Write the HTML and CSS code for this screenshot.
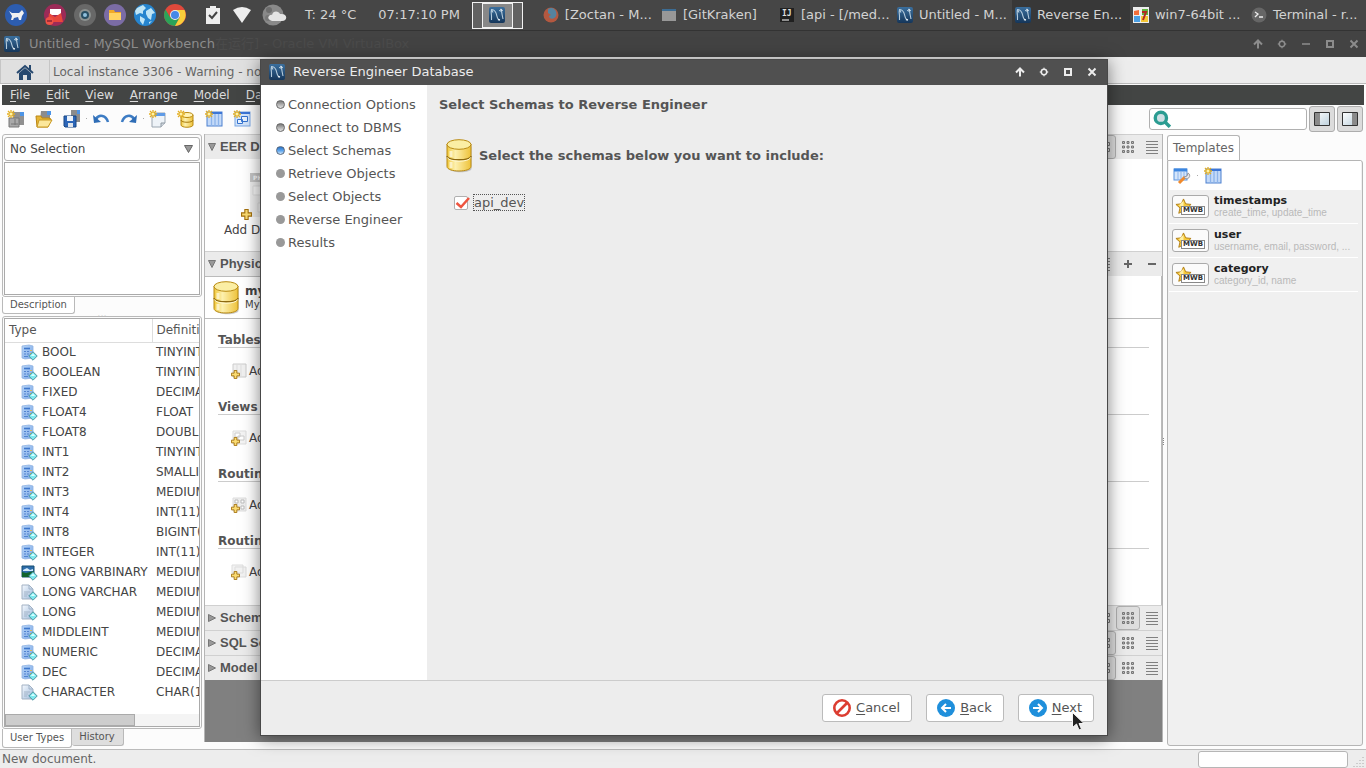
FILE: index.html
```html
<!DOCTYPE html>
<html lang="en">
<head>
<meta charset="utf-8">
<title>Untitled - MySQL Workbench</title>
<link rel="stylesheet" href="styles.css">
</head>
<body>
<svg class="sprite" aria-hidden="true">
  <defs>
    <linearGradient id="gold" x1="0" x2="1" y1="0" y2="0"><stop offset="0" stop-color="#f0c83c"/><stop offset=".35" stop-color="#fdf0ae"/><stop offset="1" stop-color="#eec23a"/></linearGradient>
    <linearGradient id="sea" x1="0" x2="0" y1="0" y2="1"><stop offset="0" stop-color="#3a6f9e"/><stop offset="1" stop-color="#15365a"/></linearGradient>
    <linearGradient id="sheet" x1="0" x2="1" y1="0" y2="1"><stop offset="0" stop-color="#f6faff"/><stop offset="1" stop-color="#9db9da"/></linearGradient>
    <linearGradient id="blue" x1="0" x2="1" y1="0" y2="1"><stop offset="0" stop-color="#b9d6f8"/><stop offset="1" stop-color="#7aa7e6"/></linearGradient>
    <linearGradient id="pane" x1="0" x2="1" y1="0" y2="1"><stop offset="0" stop-color="#fff"/><stop offset="1" stop-color="#bcd0dc"/></linearGradient>
  </defs>
  <symbol id="i-mysql" viewBox="0 0 16 16"><rect width="16" height="16" rx="2" fill="url(#sea)"/><path d="M2.500 13V9c-.5-3-.5-5 0-6.500 2 0 3.500 1.200 4.500 3.500s.8 5 2.500 6.500M2.500 2.500L4 5.500M10 3.500c2 0 3 1.500 3 3.500l1 5" fill="none" stroke="#b5cbdc" stroke-width="1.100"/><path d="M11.500 2l2 2M9 12.500l2 .5" stroke="#e7eef4" stroke-width="1.300"/></symbol>
  <symbol id="i-star" viewBox="0 0 8 8"><path d="M4 0v8M0 4h8M1 1l6 6M7 1L1 7" stroke="#e3ae23" stroke-width="1.300"/><circle cx="4" cy="4" r="1.500" fill="#fff3a8"/></symbol>
  <symbol id="i-db" viewBox="0 0 26 34"><path d="M2 6v22c0 5 22 5 22 0V6z" fill="#999" opacity=".5" transform="translate(1.500 1.500)"/><path d="M1 5v22.500c0 6 24 6 24 0V5z" fill="url(#gold)" stroke="#b98a12"/><path d="M1 17c0 5 24 5 24 0" fill="none" stroke="#8e6a10" stroke-width="1.300"/><path d="M1.500 18.500c1 5 22 5 23 0" fill="none" stroke="#fff7cf"/><ellipse cx="13" cy="5.500" rx="12" ry="4.800" fill="#fbeea4" stroke="#b98a12"/><path d="M5 12v6M5 23v6" stroke="#fffbe4" stroke-width="3" opacity=".7"/></symbol>
  <symbol id="i-newmodel" viewBox="0 0 18 18"><rect x="6" y="2" width="11" height="13" fill="#909090"/><rect x="13" y="2" width="4" height="4" fill="#4d94e6"/><path d="M2 8h10v9H2z" fill="#a9a9a9" stroke="#777"/><path d="M4 14h7M8 9v6" stroke="#777"/><use href="#i-star" width="8" height="8"/></symbol>
  <symbol id="i-open" viewBox="0 0 18 18"><path d="M6 1h9v10H5z" fill="#8c8c8c"/><rect x="12" y="1" width="4" height="4" fill="#4d94e6"/><path d="M1 6h5l1 2h7l2 1-3 8H2z" fill="#e6b535" stroke="#bb8714"/><path d="M4 10h13l-4 7H2z" fill="#fbe79b" stroke="#c99a23"/></symbol>
  <symbol id="i-save" viewBox="0 0 18 18"><path d="M8 0h9v12H8z" fill="#8c8c8c"/><rect x="14" y="0" width="3" height="4" fill="#4d94e6"/><path d="M1 6h12v11H2l-1-1z" fill="#2c66b8" stroke="#174785"/><path d="M4 6h6v5H4z" fill="#eaf2fb"/><path d="M5 13h5v4H5z" fill="#dfe5ec"/></symbol>
  <symbol id="i-undo" viewBox="0 0 18 18"><path d="M4 9c3-5 10-4 12 3" fill="none" stroke="#3d7cc4" stroke-width="2.500"/><path d="M1 5l1 8 7-1z" fill="#2f6db6"/></symbol>
  <symbol id="i-page" viewBox="0 0 18 18"><path d="M3 3h13v10l-4 4H3z" fill="#eef3f8" stroke="#9aa5b0"/><path d="M5 3h11v3H5z" fill="#5f9be6"/><path d="M12 17v-4h4" fill="#cfd6dd" stroke="#8f99a3"/><use href="#i-star" width="8" height="8"/></symbol>
  <symbol id="i-newdb" viewBox="0 0 18 18"><path d="M4 5v10c0 3 12 3 12 0V5z" fill="url(#gold)" stroke="#b98a12"/><ellipse cx="10" cy="5" rx="6" ry="2.500" fill="#fff3b4" stroke="#b98a12"/><path d="M4 10c0 3 12 3 12 0" fill="none" stroke="#a67a10"/><use href="#i-star" width="8" height="8"/></symbol>
  <symbol id="i-newtable" viewBox="0 0 18 18"><rect x="2" y="2" width="15" height="14" fill="#c4daf8" stroke="#4d80cf"/><path d="M2 3h15" stroke="#3c76d6" stroke-width="2"/><path d="M6.500 4v12M10 4v12M13.500 4v12" stroke="#8db4ea" stroke-width="1.300"/><use href="#i-star" width="8" height="8"/></symbol>
  <symbol id="i-newview" viewBox="0 0 18 18"><rect x="2" y="2" width="15" height="14" fill="#d3e5fb" stroke="#78a5e2"/><path d="M2 3h15" stroke="#3c76d6" stroke-width="2"/><path d="M8.500 6.500h6v5h-6zM4.500 9.500h5v4h-5z" fill="#eaf3fe" stroke="#3573cf"/><use href="#i-star" width="8" height="8"/></symbol>
  <symbol id="i-edittable" viewBox="0 0 18 18"><rect x="1" y="2" width="13" height="11" fill="#d5e6fb" stroke="#5a93dd"/><path d="M1 3h13" stroke="#3c86e0" stroke-width="3"/><path d="M5 4v9M8 4v9M11 4v9" stroke="#8db4ea"/><path d="M6 16l6-6" stroke="#f08a2c" stroke-width="3"/><path d="M11 10a3 3 0 1 0 4-4l-1 3z" fill="#e5e5ea" stroke="#98989e"/></symbol>
  <symbol id="i-num" viewBox="0 0 17 17"><path d="M1 2l7-1 4 1v12l-8 1-3-1z" fill="url(#blue)" stroke="#8fb2e2" stroke-width=".8"/><path d="M3 4.500h6" stroke="#3f78cc" stroke-width="1.600"/><path d="M3 7.500h2M6 7.500h2M3 10h2M6 10h2M3 12.500h4" stroke="#5283cf"/><path d="M10 6v1M10 9v1" stroke="#f6b526" stroke-width="1.500"/><use href="#i-gem" x="7" y="7" width="10" height="10"/></symbol>
  <symbol id="i-text" viewBox="0 0 17 17"><path d="M1 1h7l4 4v10H1z" fill="url(#sheet)" stroke="#a3b2c4"/><path d="M8 1v4h4M3 8h6M3 10h4M3 12h3" fill="none" stroke="#a3b4c8"/><use href="#i-gem" x="7" y="7" width="10" height="10"/></symbol>
  <symbol id="i-blob" viewBox="0 0 17 17"><path d="M1 2h12v11H1z" fill="#2e6dab" stroke="#164f73"/><path d="M2 6l4-2 3 2 3-1v2H2z" fill="#d6ebfb"/><path d="M1 8l4 1 8-2v6H1z" fill="#12642c"/><use href="#i-gem" x="7" y="7" width="10" height="10"/></symbol>
  <symbol id="i-gem" viewBox="0 0 9 9"><path d="M4.500.7l3.800 3.800-3.800 3.800L.7 4.500z" fill="#7ee9ee" stroke="#4a8794" stroke-width=".8"/><path d="M2.500 4.500l2-2.300 2 2.300z" fill="#d8ffff"/></symbol>
  <symbol id="i-plus" viewBox="0 0 10 10"><path d="M3.500.5h3v3h3v3h-3v3h-3v-3h-3v-3h3z" fill="#fbdc72" stroke="#a4700d"/></symbol>
  <symbol id="i-big" viewBox="0 0 14 14"><path d="M1.500 2.500h4v3h-4zM8.500 2.500h4v3h-4zM1.500 8.500h4v3h-4zM8.500 8.500h4v3h-4z" fill="none" stroke="#777"/></symbol>
  <symbol id="i-grid" viewBox="0 0 14 14"><path d="M1.500 1.500h2v2h-2zM6 1.500h2v2H6zM10.500 1.500h2v2h-2zM1.500 6h2v2h-2zM6 6h2v2H6zM10.500 6h2v2h-2zM1.500 10.500h2v2h-2zM6 10.500h2v2H6zM10.500 10.500h2v2h-2z" fill="#bbb" stroke="#777"/></symbol>
  <symbol id="i-list" viewBox="0 0 14 14"><path d="M1 1.500h12M1 4.500h12M1 7.500h12M1 10.500h12M1 13.500h12" stroke="#808080"/></symbol>
  <symbol id="i-up" viewBox="0 0 10 10"><path d="M5 9.500V2M1 5.500l4-4 4 4" fill="none" stroke="currentColor" stroke-width="2"/></symbol>
  <symbol id="i-gear" viewBox="0 0 10 10"><circle cx="5" cy="5" r="2.700" fill="none" stroke="currentColor" stroke-width="1.500"/><path d="M5 .800v1M5 8.200v1M.8 5h1M8.200 5h1" stroke="currentColor" stroke-width="1.500"/></symbol>
  <symbol id="i-min" viewBox="0 0 10 10"><path d="M1 5h8" stroke="currentColor" stroke-width="1.500"/></symbol>
  <symbol id="i-max" viewBox="0 0 10 10"><path d="M2 2h6v6H2z" fill="none" stroke="currentColor" stroke-width="2"/></symbol>
  <symbol id="i-close" viewBox="0 0 10 10"><path d="M1.500 1.500l7 7M8.500 1.500l-7 7" stroke="currentColor" stroke-width="2"/></symbol>
  <symbol id="i-template" viewBox="0 0 18 18"><path d="M9 1l2.300 5.200 5.700.6-4.300 3.800 1.300 5.600L9 13.300l-5 2.900 1.300-5.600L1 6.800l5.700-.6z" fill="#f7cb3c" stroke="#b07d14"/><path d="M9 3v6L4 8z" fill="#fff0a6"/></symbol>
</svg>

<header class="panel">
  <nav class="launchers" aria-label="Launchers">
    <button aria-label="Menu"><svg viewBox="0 0 22 22"><circle cx="11" cy="11" r="11" fill="#2d5db0"/><path d="M4 7l3 2h7l3-3 2 3-2 3-1 4h-2l-1-3-4 1-1 2H6l1-4z" fill="#f1f1f1"/></svg></button>
    <button aria-label="Mail"><svg viewBox="0 0 22 22"><circle cx="11" cy="11" r="11" fill="#9c2b58"/><path d="M6 5h11v6H6z" fill="#fff"/><path d="M5 9l6 4 6-4 2 9H4z" fill="#e8473c"/><circle cx="5.500" cy="17" r="4" fill="#ef5146"/><path d="M3 17h5" stroke="#8b2634" stroke-width="1.500"/></svg></button>
    <button aria-label="Settings"><svg viewBox="0 0 22 22"><circle cx="11" cy="11" r="11" fill="#686868"/><circle cx="11" cy="11" r="6" fill="#8d9291"/><circle cx="11" cy="11" r="4" fill="#284e63"/><circle cx="11" cy="11" r="2" fill="#8fc0dd"/></svg></button>
    <button aria-label="Files"><svg viewBox="0 0 22 22"><circle cx="11" cy="11" r="11" fill="#7b6ca5"/><path d="M5 6h5l1 2h6v8H5z" fill="#f0a827"/><path d="M5 9h12v7H5z" fill="#ffd261"/></svg></button>
    <button aria-label="Web"><svg viewBox="0 0 22 22"><circle cx="11" cy="11" r="11" fill="#2685cf"/><path d="M3 4l6-3 3 3-3 3v3l-3-1-4 2-1-4zM12 7l5-3 4 5-3 1-1 6-3-2-2-4zM6 12l5 3-2 6-3-4zM15 18l3-1-3 3z" fill="#bfe5f6"/></svg></button>
    <button aria-label="Chrome"><svg viewBox="0 0 22 22"><circle cx="11" cy="11" r="11" fill="#e0493b"/><path d="M1.500 5.500A11 11 0 0 0 11 22l5-9-5 3-5-3z" fill="#2ba359"/><path d="M20.500 6H11l5 7-5 9A11 11 0 0 0 20.500 6z" fill="#f8cf3b"/><circle cx="11" cy="11" r="5" fill="#eee"/><circle cx="11" cy="11" r="4" fill="#4688e8"/></svg></button>
  </nav>
  <div class="tray">
    <svg width="14" height="18" viewBox="0 0 14 18"><path d="M0 2h4V0h6v2h4v16H0z" fill="#eee"/><path d="M3 9l3 3 5-6" fill="none" stroke="#444" stroke-width="2"/></svg>
    <svg width="18" height="16" viewBox="0 0 18 16"><path d="M0 3q9-6 18 0L9 16z" fill="#eee"/></svg>
    <svg width="26" height="22" viewBox="0 0 26 22"><circle cx="11" cy="11" r="10.500" fill="#898989"/><circle cx="7" cy="6" r="3" fill="#6d6d6d"/><circle cx="6" cy="14" r="3" fill="#777"/><path d="M8 16c-4-2 0-6 2-5 1-5 7-4 8-1 8-1 8 7 2 7H10z" fill="#e4e4e4"/></svg>
    <span class="temp">T: 24 °C</span>
    <span>07:17:10 PM</span>
  </div>
  <button class="pager" aria-label="Workspace"><span><svg width="16" height="16"><use href="#i-mysql"/></svg></span></button>
  <nav class="tasks" aria-label="Windows">
    <button><svg class="dim" viewBox="0 0 16 16"><circle cx="8" cy="8" r="7.500" fill="#e2613e"/><path d="M5 2c5-3 10 2 8 7-2 4-7 3-7 0l2-1-3-2z" fill="#5a9ec5"/></svg>[Zoctan - M...</button>
    <button><svg class="dim" viewBox="0 0 16 16"><path d="M1 3h14v11H1z" fill="#bbb"/><path d="M1 2h14v2H1z" fill="#397db4"/></svg>[GitKraken]</button>
    <button><svg viewBox="0 0 16 16"><path d="M1 1h14v14H1z" fill="#202020"/><text class="ij" x="3" y="9">IJ</text><path d="M3 13h7" stroke="#fff"/></svg>[api - [/med...</button>
    <button><svg><use href="#i-mysql"/></svg>Untitled - M...</button>
    <button class="current"><svg><use href="#i-mysql"/></svg>Reverse En...</button>
    <button><svg viewBox="0 0 16 16"><path d="M0 0h16v16H0z" fill="#eee"/><path d="M1 4l5-1v5H1z" fill="#f26e3a"/><path d="M9 2h6v6H9z" fill="#5db541"/><path d="M1 9h6v6H1z" fill="#4b9fe3"/><path d="M8 9h7v6H8z" fill="#f5c736"/><path d="M9 5h4l-3 8" fill="none" stroke="#b22a20" stroke-width="2"/></svg>win7-64bit ...</button>
    <button><svg viewBox="0 0 16 16"><circle cx="8" cy="8" r="7.500" fill="#666"/><path d="M4 5l3 2-3 3M8 10h4" fill="none" stroke="#eee" stroke-width="1.300"/></svg>Terminal - r...</button>
  </nav>
</header>

<div class="titlebar">
  <svg width="16" height="16"><use href="#i-mysql"/></svg>
  <span>Untitled - MySQL Workbench</span>
  <span class="ghost">在运行] - Oracle VM VirtualBox</span>
  <div class="controls">
    <button aria-label="Shade"><svg><use href="#i-up"/></svg></button>
    <button aria-label="Options"><svg><use href="#i-gear"/></svg></button>
    <button aria-label="Minimize"><svg><use href="#i-min"/></svg></button>
    <button aria-label="Maximize"><svg><use href="#i-max"/></svg></button>
    <button aria-label="Close"><svg><use href="#i-close"/></svg></button>
  </div>
</div>

<div class="doctabs">
  <button class="home" aria-label="Home"><svg width="18" height="16" viewBox="0 0 18 16"><path d="M1 9l8-7 8 7" fill="none" stroke="#27496f" stroke-width="2"/><path d="M13 1h2v5h-2z" fill="#27496f"/><path d="M3 9l6-5 6 5v7h-4v-5H7v5H3z" fill="#27496f"/></svg></button>
  <button class="doc">Local instance 3306 - Warning - not supported</button>
</div>

<nav class="menubar" aria-label="Main menu">
  <button><u>F</u>ile</button><button><u>E</u>dit</button><button><u>V</u>iew</button><button><u>A</u>rrange</button><button><u>M</u>odel</button><button><u>D</u>atabase</button>
</nav>

<div class="toolbar">
  <button aria-label="New model"><svg><use href="#i-newmodel"/></svg></button>
  <button aria-label="Open"><svg><use href="#i-open"/></svg></button>
  <button aria-label="Save"><svg><use href="#i-save"/></svg></button>
  <i></i>
  <button aria-label="Undo"><svg><use href="#i-undo"/></svg></button>
  <button aria-label="Redo"><svg class="flip"><use href="#i-undo"/></svg></button>
  <i></i>
  <button aria-label="New diagram"><svg><use href="#i-page"/></svg></button>
  <button aria-label="New schema"><svg><use href="#i-newdb"/></svg></button>
  <button aria-label="New table"><svg><use href="#i-newtable"/></svg></button>
  <button aria-label="New view"><svg><use href="#i-newview"/></svg></button>
  <label class="search"><svg width="16" height="16" viewBox="0 0 16 16"><path d="M10 10l5 5" stroke="#2b9c92" stroke-width="3"/><circle cx="7" cy="7" r="5" fill="#cfdfe4" stroke="#2b9c92" stroke-width="3"/></svg><input type="text" aria-label="Search"></label>
  <button class="toggle" aria-label="Left panel"><svg viewBox="0 0 16 14"><path d="M.5.5h15v13H.5z" fill="url(#pane)" stroke="#333"/><path d="M1 1h5v12H1z" fill="#8a8a8a"/></svg></button>
  <button class="toggle" aria-label="Right panel"><svg viewBox="0 0 16 14"><path d="M.5.5h15v13H.5z" fill="url(#pane)" stroke="#333"/><path d="M10 1h5v12h-5z" fill="#8a8a8a"/></svg></button>
</div>

<main class="work">
  <aside class="left">
    <section class="frame">
      <div class="combo"><select aria-label="Selection"><option>No Selection</option></select><svg width="9" height="8" viewBox="0 0 9 8"><path d="M.5.5h8l-4 7z" fill="#999" stroke="#666"/></svg></div>
      <div class="blank"></div>
    </section>
    <div class="tabs"><button class="on">Description</button></div>
    <div class="grip">...</div>
    <section class="frame types">
      <div class="tablebox">
        <table>
          <thead><tr><th>Type</th><th>Definition</th></tr></thead>
          <tbody>
            <tr><td><svg><use href="#i-num"/></svg>BOOL</td><td>TINYINT(1)</td></tr>
            <tr><td><svg><use href="#i-num"/></svg>BOOLEAN</td><td>TINYINT(1)</td></tr>
            <tr><td><svg><use href="#i-num"/></svg>FIXED</td><td>DECIMAL(10,0)</td></tr>
            <tr><td><svg><use href="#i-num"/></svg>FLOAT4</td><td>FLOAT</td></tr>
            <tr><td><svg><use href="#i-num"/></svg>FLOAT8</td><td>DOUBLE</td></tr>
            <tr><td><svg><use href="#i-num"/></svg>INT1</td><td>TINYINT(4)</td></tr>
            <tr><td><svg><use href="#i-num"/></svg>INT2</td><td>SMALLINT(6)</td></tr>
            <tr><td><svg><use href="#i-num"/></svg>INT3</td><td>MEDIUMINT(9)</td></tr>
            <tr><td><svg><use href="#i-num"/></svg>INT4</td><td>INT(11)</td></tr>
            <tr><td><svg><use href="#i-num"/></svg>INT8</td><td>BIGINT(20)</td></tr>
            <tr><td><svg><use href="#i-num"/></svg>INTEGER</td><td>INT(11)</td></tr>
            <tr><td><svg><use href="#i-blob"/></svg>LONG VARBINARY</td><td>MEDIUMBLOB</td></tr>
            <tr><td><svg><use href="#i-text"/></svg>LONG VARCHAR</td><td>MEDIUMTEXT</td></tr>
            <tr><td><svg><use href="#i-text"/></svg>LONG</td><td>MEDIUMTEXT</td></tr>
            <tr><td><svg><use href="#i-num"/></svg>MIDDLEINT</td><td>MEDIUMINT(9)</td></tr>
            <tr><td><svg><use href="#i-num"/></svg>NUMERIC</td><td>DECIMAL(10,0)</td></tr>
            <tr><td><svg><use href="#i-num"/></svg>DEC</td><td>DECIMAL(10,0)</td></tr>
            <tr><td><svg><use href="#i-text"/></svg>CHARACTER</td><td>CHAR(1)</td></tr>
          </tbody>
        </table>
        <div class="hscroll"><span></span></div>
      </div>
    </section>
    <div class="tabs"><button class="on">User Types</button><button class="off">History</button></div>
  </aside>

  <section class="center">
    <h2 class="bar"><svg class="tri" viewBox="0 0 8 8"><path d="M.5.5h7l-3.500 7z"/></svg><span>EER Diagrams</span><svg class="v on"><use href="#i-big"/></svg><svg class="v"><use href="#i-grid"/></svg><svg class="v"><use href="#i-list"/></svg></h2>
    <div class="diagrams">
      <button><svg width="46" height="50" viewBox="0 0 46 50"><path d="M10 1h36v44H10z" fill="#eee"/><path d="M10 1h36v9H10z" fill="#c6c6c6"/><text class="phys" x="13" y="8">PHYSICAL</text><path d="M13 14h10v9H13zM28 14h12v10H28zM18 31h12v9H18z" fill="#f8f8f8" stroke="#ddd"/><use href="#i-plus" x="1" y="37" width="11" height="11"/></svg>Add Diagram</button>
    </div>
    <h2 class="bar"><svg class="tri" viewBox="0 0 8 8"><path d="M.5.5h7l-3.500 7z"/></svg><span>Physical Schemas</span><svg class="v"><use href="#i-list"/></svg><svg class="v" viewBox="0 0 14 14"><path d="M3 7h8M7 3v8" stroke="#666" stroke-width="2"/></svg><svg class="v" viewBox="0 0 14 14"><path d="M3 7h8" stroke="#666" stroke-width="2"/></svg></h2>
    <div class="schema">
      <div class="schematab"><svg width="26" height="34"><use href="#i-db"/></svg><p><b>mydb</b><span>MySQL Schema</span></p></div>
      <div class="objects">
        <h3>Tables</h3><button><svg viewBox="0 0 16 16"><path d="M2 1h13v13H2z" fill="#f0f0f0" stroke="#ccc"/><path d="M6 2v11M10 2v11" stroke="#ddd"/><use href="#i-plus" x="0" y="7" width="9" height="9"/></svg>Add Table</button>
        <h3>Views</h3><button><svg viewBox="0 0 16 16"><path d="M2 1h13v13H2z" fill="#f4f4f4" stroke="#ddd"/><path d="M4 3h5v4H4zM7 6h6v4H7z" fill="#fff" stroke="#ccc"/><use href="#i-plus" x="0" y="7" width="9" height="9"/></svg>Add View</button>
        <h3>Routines</h3><button><svg viewBox="0 0 16 16"><path d="M2 1h13v13H2z" fill="#eee" stroke="#ddd"/><path d="M4 3h3v3H4zM10 3h3v3h-3zM10 9h3v3h-3z" fill="#fff" stroke="#bbb"/><use href="#i-plus" x="0" y="7" width="9" height="9"/></svg>Add Routine</button>
        <h3>Routine Groups</h3><button><svg viewBox="0 0 16 16"><path d="M1 1h11v8H1zM4 3h11v10H4z" fill="#f2f2f2" stroke="#ddd"/><use href="#i-plus" x="0" y="7" width="9" height="9"/></svg>Add Group</button>
      </div>
    </div>
    <h2 class="bar"><svg class="tri" viewBox="0 0 8 8"><path d="M.5.5v7l7-3.500z"/></svg><span>Schema Privileges</span><svg class="v"><use href="#i-big"/></svg><svg class="v on"><use href="#i-grid"/></svg><svg class="v"><use href="#i-list"/></svg></h2>
    <h2 class="bar"><svg class="tri" viewBox="0 0 8 8"><path d="M.5.5v7l7-3.500z"/></svg><span>SQL Scripts</span><svg class="v on"><use href="#i-big"/></svg><svg class="v"><use href="#i-grid"/></svg><svg class="v"><use href="#i-list"/></svg></h2>
    <h2 class="bar"><svg class="tri" viewBox="0 0 8 8"><path d="M.5.5v7l7-3.500z"/></svg><span>Model Notes</span><svg class="v on"><use href="#i-big"/></svg><svg class="v"><use href="#i-grid"/></svg><svg class="v"><use href="#i-list"/></svg></h2>
  </section>

  <aside class="right">
    <div class="toptabs"><button>Templates</button></div>
    <div class="templates">
      <div class="tools"><button aria-label="Edit templates"><svg><use href="#i-edittable"/></svg></button><i></i><button aria-label="New table from template"><svg><use href="#i-newtable"/></svg></button></div>
      <ul>
        <li><span class="badge"><svg width="17" height="17"><use href="#i-template"/></svg><em>MWB</em></span><p><b>timestamps</b><span>create_time, update_time</span></p></li>
        <li><span class="badge"><svg width="17" height="17"><use href="#i-template"/></svg><em>MWB</em></span><p><b>user</b><span>username, email, password, ...</span></p></li>
        <li><span class="badge"><svg width="17" height="17"><use href="#i-template"/></svg><em>MWB</em></span><p><b>category</b><span>category_id, name</span></p></li>
      </ul>
    </div>
  </aside>
</main>

<footer class="status"><span>New document.</span><div class="progress"></div><svg class="resize" width="12" height="12" viewBox="0 0 12 12"><path d="M10 1v1M7 4v1M10 4v1M4 7v1M7 7v1M10 7v1M1 10v1M4 10v1M7 10v1M10 10v1" stroke="#aaa"/></svg></footer>

<div class="dialog" role="dialog" aria-label="Reverse Engineer Database">
  <div class="dialog-title">
    <svg width="16" height="16"><use href="#i-mysql"/></svg>
    <span>Reverse Engineer Database</span>
    <div class="controls">
      <button aria-label="Shade dialog"><svg><use href="#i-up"/></svg></button>
      <button aria-label="Dialog options"><svg><use href="#i-gear"/></svg></button>
      <button aria-label="Maximize dialog"><svg><use href="#i-max"/></svg></button>
      <button aria-label="Close dialog"><svg><use href="#i-close"/></svg></button>
    </div>
  </div>
  <div class="dialog-body">
    <ol class="steps">
      <li class="done">Connection Options</li>
      <li class="done">Connect to DBMS</li>
      <li class="now">Select Schemas</li>
      <li>Retrieve Objects</li>
      <li>Select Objects</li>
      <li>Reverse Engineer</li>
      <li>Results</li>
    </ol>
    <div class="page">
      <h1>Select Schemas to Reverse Engineer</h1>
      <div class="intro"><svg width="26" height="34"><use href="#i-db"/></svg><strong>Select the schemas below you want to include:</strong></div>
      <label class="check"><span class="box"><input type="checkbox" checked><svg width="17" height="15" viewBox="0 0 17 15"><path d="M2.500 7l4.500 4 8-9" fill="none" stroke="#ee5540" stroke-width="2.500"/></svg></span><span class="name">api_dev</span></label>
    </div>
  </div>
  <div class="actions">
    <button><svg viewBox="0 0 18 18"><circle cx="9" cy="9" r="7.700" fill="#fff" stroke="#dc3d31" stroke-width="2.600"/><path d="M4 14L14 4" stroke="#dc3d31" stroke-width="2.600"/></svg><span><u>C</u>ancel</span></button>
    <button><svg viewBox="0 0 18 18"><circle cx="9" cy="9" r="9" fill="#1f8fdb"/><path d="M14 9H5M9 5L5 9l4 4" fill="none" stroke="#fff" stroke-width="2"/></svg><span><u>B</u>ack</span></button>
    <button><svg viewBox="0 0 18 18"><circle cx="9" cy="9" r="9" fill="#1f8fdb"/><path d="M4 9h9M9 5l4 4-4 4" fill="none" stroke="#fff" stroke-width="2"/></svg><span><u>N</u>ext</span></button>
  </div>
  <svg class="cursor" width="13" height="19" viewBox="0 0 13 19"><path d="M.5.5v15l4-3.500 2.500 6 2.500-1-2.500-5.500h5z" fill="#222" stroke="#f4f4f4"/></svg>
</div>
</body>
</html>
```
FILE: styles.css
```css
*, *::before, *::after { box-sizing: border-box; }
body {
  margin: 0;
  min-height: 100vh;
  position: relative;
  display: flex;
  flex-direction: column;
  overflow: hidden;
  background: #fcfcfc;
  color: #444;
  font: 12px/16px "DejaVu Sans", "Noto Sans CJK SC", sans-serif;
}
button {
  font: inherit;
  color: inherit;
  background: none;
  border: 0;
  padding: 0;
  margin: 0;
  white-space: nowrap;
}
svg { flex: none; display: block; }
.sprite { position: absolute; width: 0; height: 0; }
h1, h2, h3, p, ul, ol { margin: 0; padding: 0; list-style: none; }
u { text-underline-offset: 2px; }

/* Desktop panel */
.panel {
  height: 31px;
  display: flex;
  align-items: center;
  background: #464646;
  border-bottom: 1px solid #333;
  color: #d3d3d3;
  font-size: 13px;
}
.launchers { display: flex; gap: 8px; padding-left: 5px; }
.launchers svg { width: 22px; height: 22px; }
.launchers button:first-child { margin-right: 9px; }
.tray { display: flex; align-items: center; gap: 13px; padding-left: 20px; white-space: nowrap; }
.tray svg:nth-child(3) { margin-left: -2px; }
.tray .temp { margin: 0 9px 0 4px; }
.pager { margin-left: 12px; border: 1px solid #f2f2f2; height: 27px; width: 51px; padding: 0 9px; background: #626262; }
.pager span { display: grid; place-items: center; height: 25px; border: 1px solid #f2f2f2; background: #888; }
.tasks { flex: 1; display: flex; align-self: stretch; padding-left: 17px; }
.tasks button { flex: 1 1 0; min-width: 0; display: flex; align-items: center; gap: 6px; padding: 0 3px; overflow: hidden; }
.tasks svg { width: 16px; height: 16px; }
.tasks .dim { opacity: .7; }
.tasks .current { background: #383838; }
.ij { font: bold 8px "DejaVu Sans Mono", monospace; fill: #ddd; }

/* Window frame */
.titlebar, .dialog-title { display: flex; align-items: center; font-size: 13px; height: 26px; }
.titlebar { background: #434343; color: #8c8c8c; padding: 0 7px 0 4px; gap: 9px; }
.titlebar .ghost { margin-left: -9px; color: #4b4b4b; }
.controls { margin-left: auto; display: flex; gap: 14px; }
.controls svg { width: 10px; height: 10px; }
.doctabs { display: flex; height: 27px; background: #ededed; border-bottom: 1px solid #bbb; padding-top: 2px; }
.doctabs button { background: #e0e0e0; border: 1px solid #c6c6c6; border-bottom: 0; color: #666; }
.doctabs .home { width: 50px; display: grid; place-items: center; }
.doctabs .doc { padding: 0 12px 0 3px; border-left: 0; min-width: 311px; text-align: left; }
.menubar { display: flex; gap: 16px; margin: 1px 2px 0; padding: 0 8px; height: 20px; background: #434544; color: #dcdcdc; }
.toolbar { display: flex; align-items: center; height: 29px; padding: 0 3px 2px 7px; gap: 10px; }
.toolbar svg { width: 18px; height: 18px; }
.toolbar i, .tools i { width: 1px; height: 1px; background: #aaa; }
.toolbar i { margin: 0 -5px; }
.toolbar .flip { transform: scaleX(-1); }
.search { margin-left: auto; display: flex; align-items: center; width: 158px; height: 22px; padding: 0 3px; border: 1px solid #b0b0b0; border-radius: 3px; background: #fff; }
.search input { flex: 1; min-width: 0; border: 0; outline: 0; background: none; }
.toolbar .toggle { display: grid; place-items: center; width: 26px; height: 26px; border: 1px solid #adadad; border-radius: 3px; background: #dcdcdc; margin-left: -8px; }
.toolbar .toggle svg { width: 16px; height: 14px; }

/* Work area */
.work { flex: 1; display: grid; grid-template-columns: 200px minmax(0, 1fr) 196px; column-gap: 2px; padding: 0 3px 1px 2px; min-height: 0; }
.left, .center, .right { display: flex; flex-direction: column; min-width: 0; }
.frame { border: 1px solid #b9b9b9; border-radius: 3px; padding: 2px 1px 1px; }
.combo { position: relative; margin: 0 0 1px; }
.combo select { appearance: none; width: 100%; height: 24px; display: block; font: inherit; color: #444; border: 1px solid #b0b0b0; border-radius: 3px; background: #fff; padding: 0 5px; }
.combo svg { position: absolute; right: 7px; top: 8px; }
.blank { height: 133px; border: 1px solid #aaa; background: #fff; }
.tabs { display: flex; align-items: flex-start; font-size: 10px; color: #555; }
.tabs button { height: 17px; padding: 0 7px; border: 1px solid #b9b9b9; border-top: 0; border-radius: 0 0 3px 3px; background: #fff; }
.tabs .off { background: #dedede; border-left: 0; padding: 0 8px 0 7px; }
.grip { height: 2px; line-height: 0; font-size: 10px; text-align: center; color: #999; }
.types { flex: 1; display: flex; padding: 1px; min-height: 0; }
.tablebox { flex: 1; min-width: 0; display: flex; flex-direction: column; border: 1px solid #aaa; background: #fff; overflow: hidden; }
table { border-collapse: collapse; table-layout: fixed; width: 270px; }
th { height: 23px; padding: 0 4px; text-align: left; font-weight: 400; border-bottom: 1px solid #ddd; color: #555; }
th:first-child { width: 147px; border-right: 1px solid #ddd; }
td { height: 20px; padding: 0 0 0 4px; white-space: nowrap; line-height: 16px; }
td:first-child { padding-left: 16px; }
td svg { width: 17px; height: 17px; float: left; margin-right: 4px; }
.hscroll { margin-top: auto; background: #f4f4f4; }
.hscroll span { display: block; width: 67%; height: 12px; background: #cdcdcd; border: 1px solid #aaa; }
.types + .tabs .on { height: 19px; }
.types + .tabs { height: 19px; }

.center { position: relative; background: #808080; border-left: 1px solid #b5b5b5; border-right: 1px solid #b5b5b5; margin: 0 2px 6px 0; }
.center::after { content: ""; position: absolute; right: -2px; top: 304px; height: 7px; border-right: 1px dotted #888; }
.bar { display: flex; align-items: center; flex: none; height: 25px; padding: 0 0 0 3px; background: #ebebeb; border-top: 1px solid #d0d0d0; font: bold 13px/16px "Liberation Sans", Arial, sans-serif; color: #555; overflow: hidden; }
.bar span { flex: 1; padding-left: 4px; }
.tri { width: 8px; height: 8px; fill: #999; stroke: #777; }
.v { width: 24px; height: 24px; padding: 4px; border: 1px solid transparent; border-radius: 3px; }
.v:last-child { margin-right: -2px; }
.v.on { border-color: #b0b0b0; background: #dedede; }
.diagrams { flex: none; height: 92px; background: #fff; padding: 13px 19px; }
.diagrams button { display: flex; flex-direction: column; align-items: center; }
.phys { font: bold 6px "DejaVu Sans", sans-serif; fill: #fff; }
.schema { flex: none; background: #fff; border-right: 1px solid #bbb; }
.schematab { display: flex; align-items: center; gap: 6px; width: 50%; height: 43px; padding-left: 8px; border-top: 1px solid #bbb; }
.schematab p { display: flex; flex-direction: column; line-height: 13px; }
.schematab span { font-size: 10px; }
.objects { height: 287px; padding: 13px 12px 0 13px; border-top: 1px solid #bbb; margin-top: -1px; }
.objects h3 { height: 16px; font-size: 12px; line-height: 16px; border-bottom: 1px solid #ccc; color: #555; }
.objects button { display: flex; align-items: center; gap: 2px; height: 51px; padding: 0 0 6px 13px; }
.objects svg { width: 16px; height: 16px; }

.right { padding: 1px 0 2px; }
.toptabs button { display: block; height: 25px; padding: 0 5px; border: 1px solid #b5b5b5; border-bottom: 0; border-radius: 3px 3px 0 0; background: #fff; color: #666; }
.templates { flex: 1; border: 1px solid #b5b5b5; border-radius: 0 3px 3px 3px; padding: 0 1px 1px; background: #f0f0f0; }
.tools { display: flex; align-items: center; height: 29px; gap: 6px; padding-left: 4px; background: #fff; }
.tools svg { width: 18px; height: 18px; }
.templates li { display: flex; align-items: center; gap: 5px; height: 34px; margin-right: 3px; padding-left: 3px; border-bottom: 1px solid #fff; }
.badge { position: relative; flex: none; width: 37px; height: 23px; padding: 2px 2px; border: 1px solid #aaa; border-radius: 3px; background: #fbfbfb; }
.badge em { position: absolute; right: 3px; bottom: 2px; padding: 0 1px; border: 1px solid #888; background: #fff; font: bold 7px/7px "DejaVu Sans", sans-serif; color: #333; }
.templates p { display: flex; flex-direction: column; min-width: 0; line-height: 12px; white-space: nowrap; }
.templates b { font-size: 11px; line-height: 13px; color: #222; }
.templates p span { font: 10px/12px "Liberation Sans", Arial, sans-serif; color: #b9b9b9; }

.status { display: flex; align-items: center; height: 19px; padding: 0 1px 0 2px; border-top: 1px solid #bbb; background: #ededed; color: #666; }
.progress { margin-left: auto; margin-right: 5px; width: 150px; height: 17px; border: 1px solid #b5b5b5; border-radius: 3px; background: #fefefe; }
.resize { align-self: flex-end; }

/* Wizard dialog */
.dialog {
  position: absolute;
  inset: 59px 258px 32px 260px;
  display: flex;
  flex-direction: column;
  border: 1px solid #484848;
  background: #ededed;
  color: #555;
  font-size: 13px;
  box-shadow: 0 2px 16px rgba(0, 0, 0, .5);
}
.dialog-title { height: 25px; flex: none; gap: 8px; padding: 0 10px 1px 8px; background: #505050; color: #ececec; }
.dialog-body { flex: 1; display: flex; min-height: 0; border-bottom: 1px solid #ccc; }
.steps { width: 166px; flex: none; padding: 8px 0 0 15px; background: #fff; }
.steps li { display: flex; align-items: center; gap: 3px; height: 23px; white-space: nowrap; }
.steps li::before { content: ""; flex: none; width: 9px; height: 9px; border-radius: 50%; background: #999; }
.steps .done::before { border: 1px solid #666; background: linear-gradient(#777, #aaa 45%, #e4e4e4); }
.steps .now::before { border: 1px solid #55667c; background: linear-gradient(#2873c8, #62a8ee 55%, #d4e8fb); }
.page { flex: 1; min-width: 0; padding: 12px; }
.page h1 { font-size: 13px; line-height: 16px; }
.intro { display: flex; align-items: center; gap: 7px; padding: 26px 0 0 7px; }
.check { display: inline-flex; align-items: center; gap: 3px; margin: 21px 0 0 15px; }
.box { position: relative; width: 16px; height: 14px; }
.box input { appearance: none; display: block; width: 14px; height: 14px; margin: 0; border: 1px solid #b0b0b0; border-radius: 2px; background: #fff; }
.box svg { position: absolute; left: 0; top: 0; }
.name { border: 1px dotted #555; line-height: 15px; }
.actions { display: flex; justify-content: flex-end; gap: 14px; padding: 13px; }
.actions button { display: flex; align-items: center; gap: 5px; height: 28px; padding: 0 11px 0 10px; border: 1px solid #bbb; border-radius: 3px; background: #fff; }
.actions svg { width: 18px; height: 18px; }
.cursor { position: absolute; right: 22px; bottom: 4px; }
```
